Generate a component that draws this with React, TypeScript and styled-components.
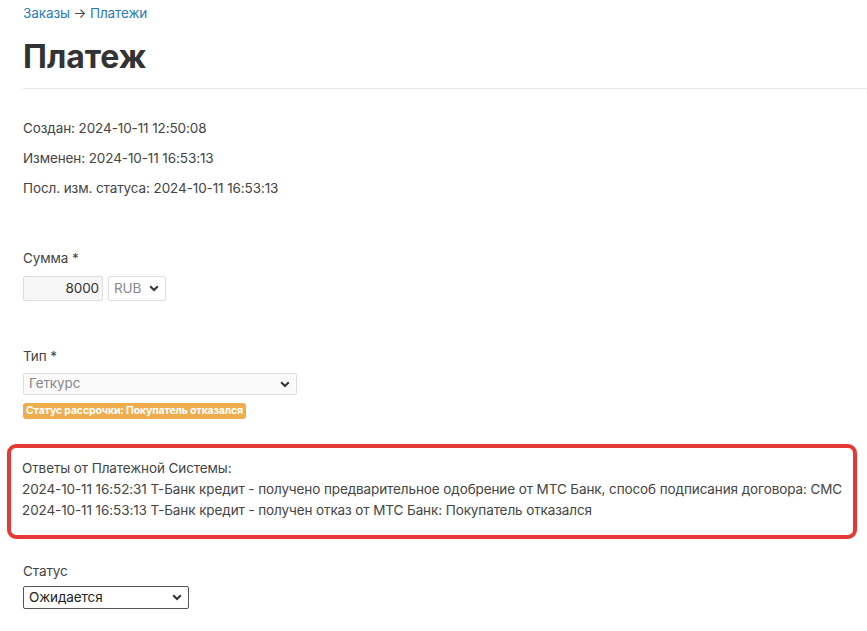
import React from "react";
import styled, { createGlobalStyle } from "styled-components";

const Global = createGlobalStyle`
  html, body { margin: 0; padding: 0; background: #fff; }
  body {
    font-family: Inter, "Noto Sans", sans-serif;
    color: #333;
    font-size: 13.5px;
    letter-spacing: -0.1px;
  }
`;

const Page = styled.div`
  padding: 0 0 0 23px;
  display: flex;
  flex-direction: column;
`;

const Breadcrumbs = styled.div`
  margin-top: 3px;
  line-height: 20px;
  color: #444;
  a { color: #2a7ab8; text-decoration: none; }
`;

const Title = styled.h1`
  margin: 14px 0 0;
  font-size: 32px;
  font-weight: 650;
  letter-spacing: 0;
  line-height: 40px;
  color: #333;
  padding-bottom: 11px;
  border-bottom: 1px solid #e8e8e8;
`;

const Meta = styled.div`
  margin-top: 29px;
  display: flex;
  flex-direction: column;
  gap: 10px;
`;

const MetaLine = styled.div`
  line-height: 20px;
  color: #444;
`;

const Field = styled.div<{ $top: number }>`
  margin-top: ${(p) => p.$top}px;
  display: flex;
  flex-direction: column;
  align-items: flex-start;
`;

const Label = styled.div<{ $gap: number }>`
  line-height: 20px;
  color: #444;
  margin-bottom: ${(p) => p.$gap}px;
`;

const Row = styled.div`
  display: flex;
  gap: 5px;
`;

const NumberInput = styled.div`
  box-sizing: border-box;
  width: 80px;
  height: 25px;
  border: 1px solid #ddd;
  border-radius: 2px;
  background: #f6f6f6;
  text-align: right;
  padding: 0 3px;
  line-height: 23px;
  color: #333;
`;

const SelectBox = styled.div<{ $w: number; $h: number; $dark?: boolean; $muted?: boolean }>`
  box-sizing: border-box;
  width: ${(p) => p.$w}px;
  height: ${(p) => p.$h}px;
  border: 1px solid ${(p) => (p.$dark ? "#555" : "#ddd")};
  border-radius: 2px;
  background: ${(p) => (p.$muted ? "#fafafa" : "#fff")};
  display: flex;
  align-items: center;
  justify-content: space-between;
  padding: 0 6px 0 5px;
  color: ${(p) => (p.$dark ? "#222" : "#888")};
  line-height: 1;
`;

const Chevron = () => (
  <svg width="10" height="7" viewBox="0 0 10 7">
    <path d="M1.2 1.2 L5 5 L8.8 1.2" fill="none" stroke="#333" strokeWidth="2" />
  </svg>
);

const Badge = styled.span`
  margin-top: 8px;
  background: #f0ad4e;
  color: #fff;
  font-weight: 700;
  font-size: 10.5px;
  letter-spacing: -0.15px;
  line-height: 16px;
  padding: 0 3px;
  border-radius: 3px;
`;

const Highlight = styled.div`
  margin: 25px 10px 0 -16px;
  border: 4.5px solid #e53935;
  border-radius: 9px;
  padding: 10px 4px 14px 11px;
  display: flex;
  flex-direction: column;
  line-height: 21px;
  color: #444;
`;

const ResponseLine = styled.div`
  white-space: nowrap;
`;

export default function App() {
  return (
    <>
      <Global />
      <Page>
        <Breadcrumbs>
          <a href="#">Заказы</a> → <a href="#">Платежи</a>
        </Breadcrumbs>
        <Title>Платеж</Title>
        <Meta>
          <MetaLine>Создан: 2024-10-11 12:50:08</MetaLine>
          <MetaLine>Изменен: 2024-10-11 16:53:13</MetaLine>
          <MetaLine>Посл. изм. статуса: 2024-10-11 16:53:13</MetaLine>
        </Meta>
        <Field $top={50}>
          <Label $gap={8}>Сумма *</Label>
          <Row>
            <NumberInput>8000</NumberInput>
            <SelectBox $w={58} $h={25}>
              RUB <Chevron />
            </SelectBox>
          </Row>
        </Field>
        <Field $top={45}>
          <Label $gap={7}>Тип *</Label>
          <SelectBox $w={274} $h={22} $muted>
            Геткурс <Chevron />
          </SelectBox>
          <Badge>Статус рассрочки: Покупатель отказался</Badge>
        </Field>
        <Highlight>
          <ResponseLine>Ответы от Платежной Системы:</ResponseLine>
          <ResponseLine>2024-10-11 16:52:31 Т-Банк кредит - получено предварительное одобрение от МТС Банк, способ подписания договора: СМС</ResponseLine>
          <ResponseLine>2024-10-11 16:53:13 Т-Банк кредит - получен отказ от МТС Банк: Покупатель отказался</ResponseLine>
        </Highlight>
        <Field $top={22}>
          <Label $gap={5}>Статус</Label>
          <SelectBox $w={166} $h={23} $dark>
            Ожидается <Chevron />
          </SelectBox>
        </Field>
      </Page>
    </>
  );
}
